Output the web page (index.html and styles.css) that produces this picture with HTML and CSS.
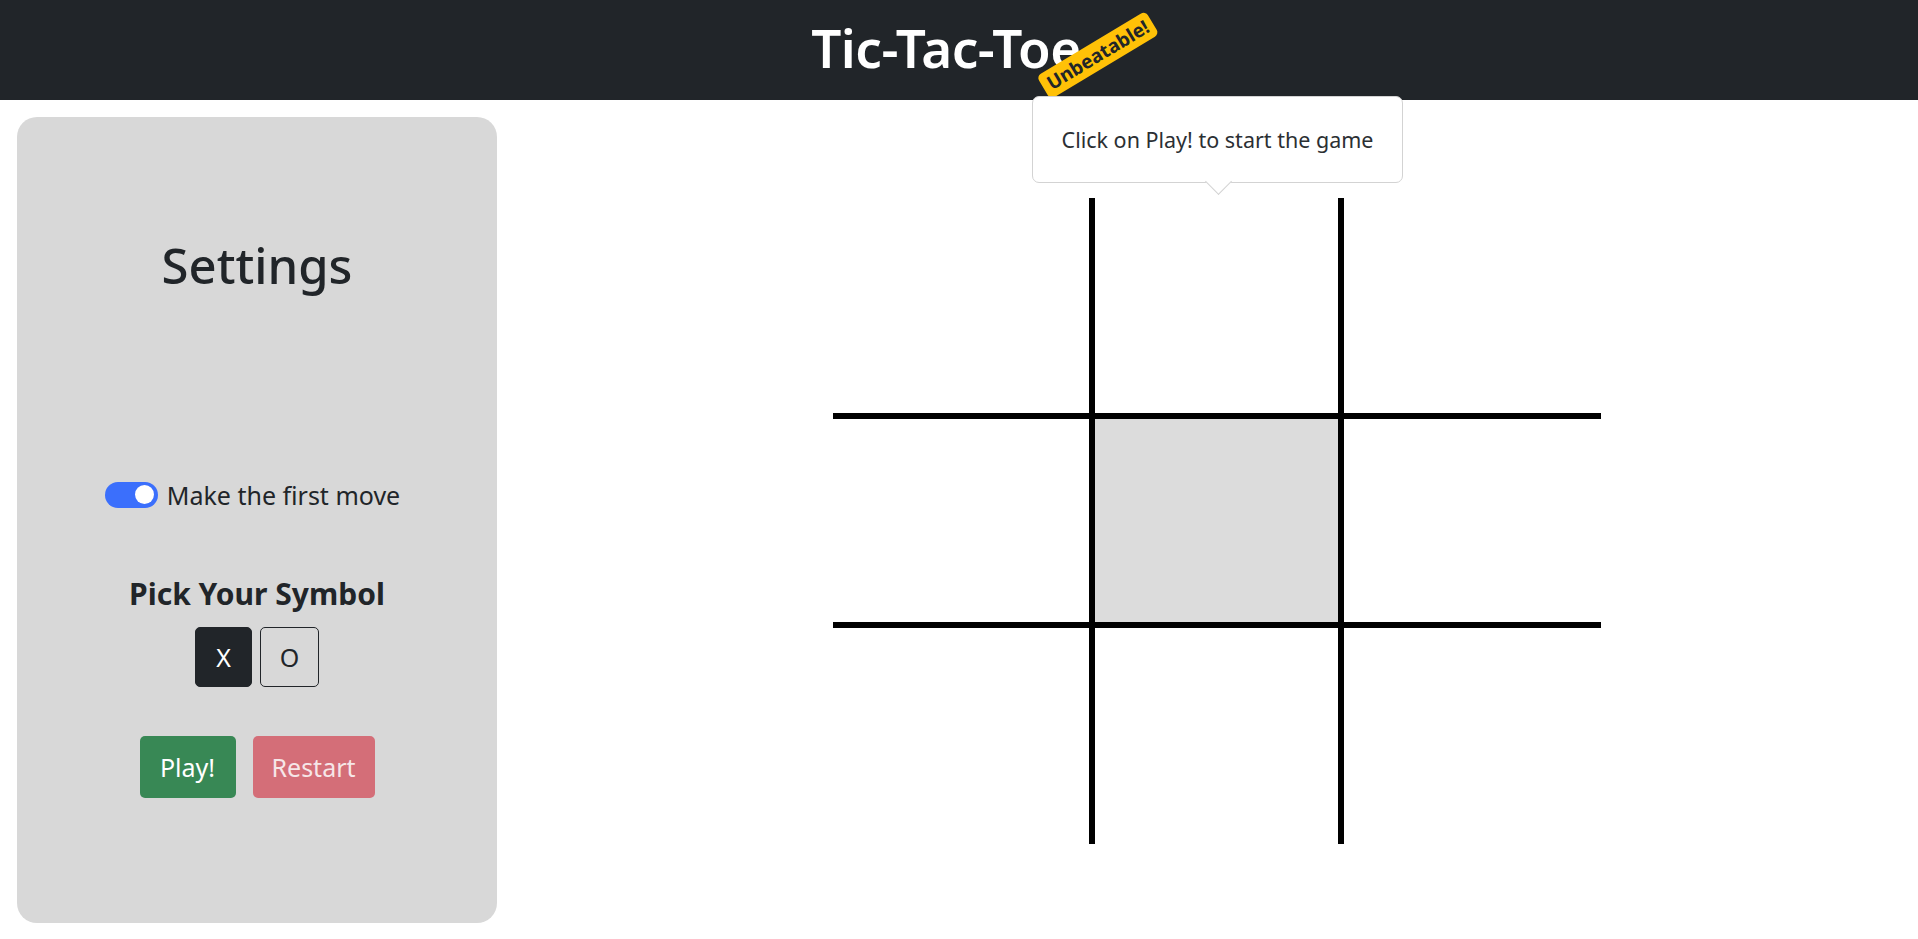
FILE: index.html
```html
<!DOCTYPE html>
<html lang="en">
<head>
<meta charset="utf-8">
<title>Tic-Tac-Toe</title>
<link rel="stylesheet" href="styles.css">
</head>
<body>
<header class="topbar">
  <h1 class="brand">Tic-Tac-Toe<span class="badge">Unbeatable!</span></h1>
</header>
<main class="main">
  <aside class="settings">
    <h2 class="settings-title">Settings</h2>
    <label class="switch-row">
      <span class="switch"><span class="knob"></span></span>
      <span class="switch-label">Make the first move</span>
    </label>
    <h3 class="pick-title">Pick Your Symbol</h3>
    <div class="symbols">
      <button class="sym sym-x sym-active">X</button>
      <button class="sym sym-o">O</button>
    </div>
    <div class="actions">
      <button class="btn btn-play">Play!</button>
      <button class="btn btn-restart">Restart</button>
    </div>
  </aside>
  <section class="board-wrap">
    <div class="tip">Click on Play! to start the game</div>
    <div class="board">
      <div class="cell c-r c-b"></div>
      <div class="cell c-r c-b"></div>
      <div class="cell c-b"></div>
      <div class="cell c-r c-b"></div>
      <div class="cell c-r c-b c-hl"></div>
      <div class="cell c-b"></div>
      <div class="cell c-r"></div>
      <div class="cell c-r"></div>
      <div class="cell"></div>
    </div>
  </section>
</main>
</body>
</html>
```
FILE: styles.css
```css
* { box-sizing: border-box; }
html, body { margin: 0; padding: 0; }
body {
  font-family: "Noto Sans", "Open Sans", sans-serif;
  color: #212529;
  background: #fff;
  width: 1918px;
  height: 939px;
  overflow: hidden;
}
.topbar {
  height: 100px;
  background: #212529;
  display: flex;
  justify-content: center;
  align-items: center;
}
.brand {
  position: relative;
  margin: 0 26px 5px 0;
  color: #fff;
  font-size: 53px;
  font-weight: 600;
  line-height: 1.2;
  letter-spacing: -0.5px;
}
.badge {
  position: absolute;
  left: calc(100% + 17px);
  top: 39px;
  transform: translate(-50%, -50%) rotate(-31deg);
  background: #ffc107;
  color: #212529;
  font-size: 19px;
  font-weight: 700;
  line-height: 1.2;
  padding: 2px 6px;
  border-radius: 5px;
  letter-spacing: 0;
  white-space: nowrap;
}
.main {
  display: flex;
  align-items: flex-start;
  padding: 17px 0 0 17px;
}
.settings {
  width: 480px;
  height: 806px;
  background: #d8d8d8;
  border-radius: 20px;
  display: flex;
  flex-direction: column;
  align-items: center;
}
.settings-title {
  margin: 119px 0 0;
  font-size: 49px;
  font-weight: 500;
  line-height: 1.2;
}
.switch-row {
  margin-top: 185px;
  height: 30px;
  display: flex;
  align-items: center;
  gap: 9px;
  margin-left: -9px;
}
.switch {
  width: 53px;
  height: 26px;
  border-radius: 13px;
  background: #3b6ffc;
  display: flex;
  align-items: center;
  justify-content: flex-end;
  padding-right: 4px;
}
.knob {
  width: 19px;
  height: 19px;
  border-radius: 50%;
  background: #fff;
}
.switch-label {
  font-size: 25px;
  line-height: 30px;
}
.pick-title {
  margin: 66px 0 0;
  font-size: 30px;
  font-weight: 700;
  line-height: 1.2;
}
.symbols {
  margin-top: 15px;
  display: flex;
  gap: 8px;
}
.sym {
  height: 60px;
  border: 1px solid #212529;
  border-radius: 5px;
  background: transparent;
  color: #212529;
  font-family: inherit;
  font-size: 25px;
  padding: 0;
}
.sym-x { width: 57px; }
.sym-o { width: 59px; }
.sym-active {
  background: #212529;
  color: #fff;
}
.actions {
  margin-top: 49px;
  display: flex;
  gap: 17px;
}
.btn {
  height: 62px;
  border: none;
  border-radius: 5px;
  font-family: inherit;
  font-size: 25px;
  color: #fff;
  padding: 0;
}
.btn-play { width: 96px; background: #388855; }
.btn-restart { width: 122px; background: #d46e78; color: #f6e6e8; }
.board-wrap {
  position: relative;
  margin: 81px 0 0 336px;
}
.board {
  display: grid;
  grid-template-columns: 262px 249px 257px;
  grid-template-rows: 221px 209px 216px;
}
.cell { background: #fff; }
.c-r { border-right: 6px solid #000; }
.c-b { border-bottom: 6px solid #000; }
.c-hl { background: #dcdcdc; }
.tip {
  position: absolute;
  left: 199px;
  top: -102px;
  width: 371px;
  height: 87px;
  background: #fff;
  border: 1px solid #d3d3d3;
  border-radius: 7px;
  display: flex;
  align-items: center;
  justify-content: center;
  font-size: 21.5px;
  color: #2b2f33;
  z-index: 2;
}
.tip::after {
  content: "";
  position: absolute;
  left: 50%;
  bottom: -9px;
  width: 18px;
  height: 18px;
  margin-left: -9px;
  background: #fff;
  border-right: 1px solid #d3d3d3;
  border-bottom: 1px solid #d3d3d3;
  transform: rotate(45deg);
}
```
